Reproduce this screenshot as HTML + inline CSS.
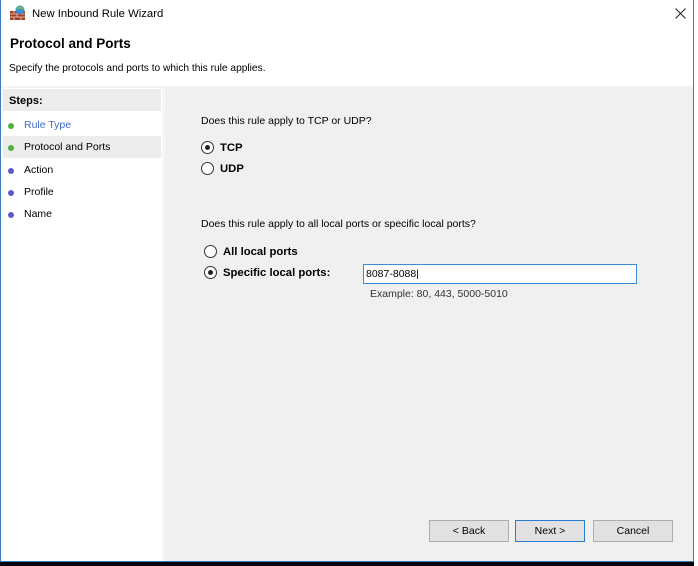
<!DOCTYPE html><html><head><style>
body{margin:0;width:698px;height:566px;background:#000;position:relative;overflow:hidden;font-family:"Liberation Sans",sans-serif;font-size:10.5px;color:#000}
.win{position:absolute;left:0;top:0;width:692px;height:561px;background:#fff;border:1px solid #3c7fc1;border-top:none}
.abs{position:absolute;white-space:nowrap}
.b{font-size:11.3px;font-weight:bold}
.rad{position:absolute;width:11px;height:11px;border:1px solid #333;border-radius:50%;background:#fff}
.rad.on::after{content:"";position:absolute;left:3px;top:3px;width:5px;height:5px;border-radius:50%;background:#222}
.btn{position:absolute;top:520px;width:78px;height:20px;border:1px solid #adadad;background:#e1e1e1;text-align:center;line-height:20px;font-size:10.5px}
.dot{position:absolute;left:7px;width:6px;height:6px;border-radius:50%}
</style></head><body>
<div class="abs" style="left:694px;top:0;width:4px;height:566px;background:#fff"></div>
<div class="win">
 <svg class="abs" style="left:9px;top:5px" width="17" height="16"><rect x="0" y="6" width="15" height="9" fill="#a0402a"/><path d="M0 9h15M0 12h15M4 6v3M10 6v3M7 9v3M4 12v3M11 12v3" stroke="#e0b0a0" stroke-width="1"/><circle cx="10" cy="5" r="4.5" fill="#3a8fd0"/><path d="M7 4q3-3 6 0" stroke="#7cc04a" stroke-width="2" fill="none"/></svg>
 <div class="abs" style="left:31px;top:8px;font-size:11.3px">New Inbound Rule Wizard</div>
 <svg class="abs" style="left:674px;top:8px" width="11" height="11"><path d="M0.5 0.5L10.5 10.5M10.5 0.5L0.5 10.5" stroke="#222" stroke-width="1"/></svg>
 <div class="abs" style="left:9px;top:36px;font-size:13.5px;font-weight:bold">Protocol and Ports</div>
 <div class="abs" style="left:8px;top:63px;font-size:10.2px">Specify the protocols and ports to which this rule applies.</div>
 <div class="abs" style="left:0;top:86px;width:692px;height:2px;background:#f4f4f4"></div>
 <div class="abs" style="left:1px;top:88px;width:160px;height:473px;background:#fff"></div>
 <div class="abs" style="left:2px;top:89px;width:158px;height:22px;background:#ececec"></div>
 <div class="abs" style="left:8px;top:95px;font-size:11px;font-weight:bold">Steps:</div>
 <div class="abs" style="left:2px;top:136px;width:158px;height:22px;background:#ececec"></div>
 <div class="dot" style="top:123px;background:#4fb23e"></div><div class="abs" style="left:23px;top:119px;color:#3d6fc4">Rule Type</div>
 <div class="dot" style="top:145px;background:#4fb23e"></div><div class="abs" style="left:23px;top:141px">Protocol and Ports</div>
 <div class="dot" style="top:168px;background:#5a5ac8"></div><div class="abs" style="left:23px;top:164px">Action</div>
 <div class="dot" style="top:190px;background:#5a5ac8"></div><div class="abs" style="left:23px;top:186px">Profile</div>
 <div class="dot" style="top:212px;background:#5a5ac8"></div><div class="abs" style="left:23px;top:208px">Name</div>
 <div class="abs" style="left:161px;top:88px;width:3px;height:473px;background:#f6f6f6"></div>
 <div class="abs" style="left:164px;top:88px;width:528px;height:473px;background:#f0f0f0"></div>
 <div class="abs" style="left:200px;top:115px">Does this rule apply to TCP or UDP?</div>
 <div class="rad on" style="left:200px;top:141px"></div><div class="abs b" style="left:219px;top:142px">TCP</div>
 <div class="rad" style="left:200px;top:162px"></div><div class="abs b" style="left:219px;top:163px">UDP</div>
 <div class="abs" style="left:200px;top:218px">Does this rule apply to all local ports or specific local ports?</div>
 <div class="rad" style="left:203px;top:245px"></div><div class="abs b" style="left:222px;top:246px">All local ports</div>
 <div class="rad on" style="left:203px;top:266px"></div><div class="abs b" style="left:222px;top:267px">Specific local ports:</div>
 <div class="abs" style="left:362px;top:264px;width:272px;height:18px;border:1px solid #3c8ad8;background:#fff"><span style="position:absolute;left:2px;top:3px;font-size:10.5px">8087-8088|</span></div>
 <div class="abs" style="left:369px;top:288px;color:#333">Example: 80, 443, 5000-5010</div>
 <div class="btn" style="left:428px">&lt; Back</div>
 <div class="btn" style="left:514px;width:68px;border:1px solid #2a7bd2">Next &gt;</div>
 <div class="btn" style="left:592px">Cancel</div>
</div>
</body></html>
